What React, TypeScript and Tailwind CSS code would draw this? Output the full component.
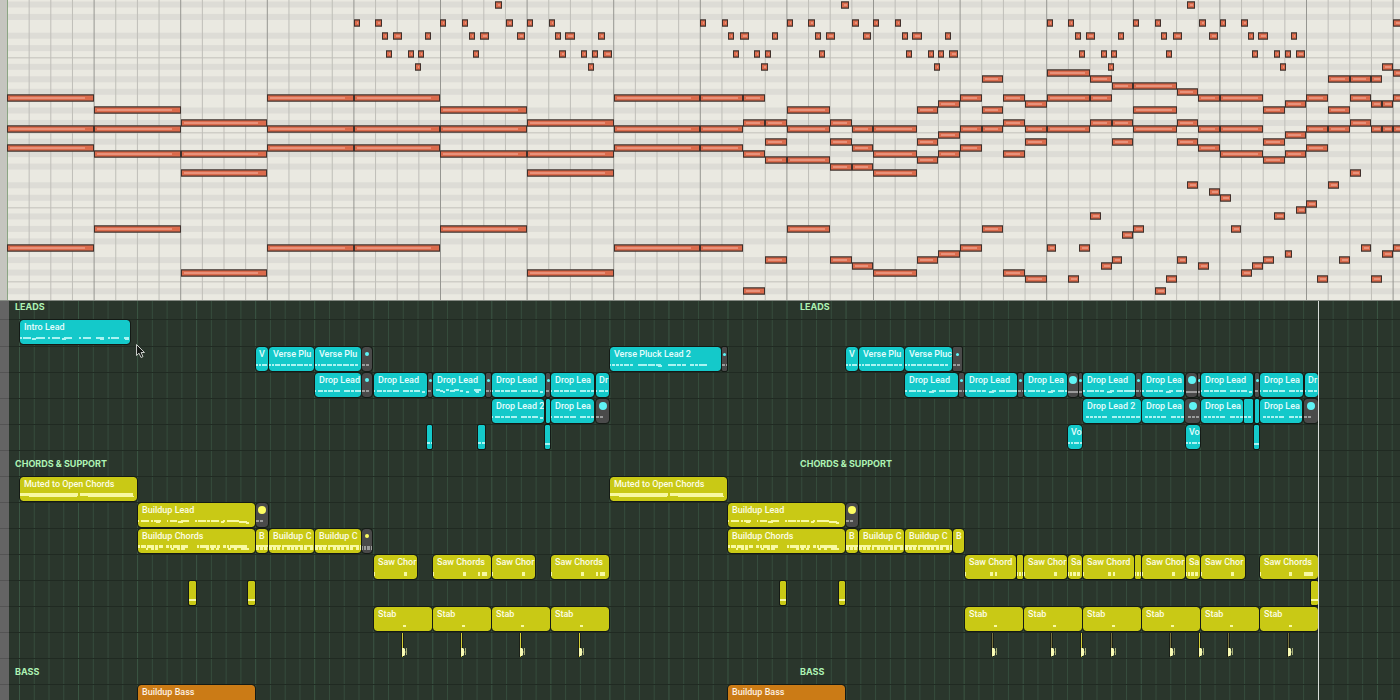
import type { ReactNode } from "react";

type Span = [start: number, length: number];

const BEAT = 21.65;
const ROLL_LEFT = 7.4;
const ROLL_WIDTH_BEATS = 140;
const SEMITONE = 6.234;
const BLACK_KEYS = [0, 2, 5, 7, 10];
const GUTTER = 9;

// sustained notes, keyed by the semitone row counted from the top
const NOTES: Record<number, Span[]> = {
  10: [[63.5, 0.5]],
  11: [[48, 2], [64, 1]],
  12: [[45, 1], [50, 1], [61, 1], [62, 1], [63, 0.5]],
  13: [[51, 1], [52, 2]],
  14: [[54, 1]],
  15: [[0, 4], [12, 4], [16, 4], [28, 4], [32, 2], [34, 1], [44, 1], [46, 1], [48, 2], [50, 1], [55, 1], [56, 2], [60, 1], [62, 1], [64, 1]],
  16: [[43, 1], [47, 1], [59, 1], [63, 0.5], [63.5, 0.5]],
  17: [[4, 4], [20, 4], [36, 2], [42, 1], [45, 1], [52, 2], [58, 1], [61, 1]],
  19: [[8, 4], [24, 4], [34, 1], [35, 1], [38, 1], [46, 1], [50, 1], [51, 1], [54, 1], [62, 1]],
  20: [[0, 4], [4, 4], [12, 4], [16, 4], [20, 4], [28, 4], [32, 2], [36, 2], [39, 1], [40, 2], [44, 1], [45, 1], [47, 1], [48, 2], [52, 2], [55, 1], [56, 2], [60, 1], [61, 1], [63, 0.5], [63.5, 0.5], [64, 1]],
  21: [[43, 1], [59, 1]],
  22: [[35, 1], [38, 1], [42, 1], [47, 1], [51, 1], [54, 1], [58, 1]],
  23: [[0, 4], [12, 4], [16, 4], [28, 4], [32, 2], [39, 1], [44, 1], [55, 1], [60, 1]],
  24: [[4, 4], [8, 4], [20, 4], [24, 4], [34, 1], [40, 2], [43, 1], [46, 1], [56, 2], [59, 1]],
  25: [[35, 1], [36, 2], [42, 1], [58, 1]],
  26: [[38, 1], [39, 1]],
  27: [[8, 4], [24, 4], [40, 2], [62, 0.5]],
  29: [[54.5, 0.5], [61, 0.5]],
  30: [[55.5, 0.5]],
  31: [[56, 0.5]],
  32: [[60, 0.5]],
  33: [[59.5, 0.5]],
  34: [[50, 0.5], [58.5, 0.5]],
  36: [[4, 4], [20, 4], [36, 2], [45, 1], [52, 0.5], [56.5, 0.5]],
  37: [[51.5, 0.5]],
  39: [[0, 4], [12, 4], [16, 4], [28, 4], [32, 2], [44, 1], [48, 0.45], [49.5, 0.5], [62.5, 0.5], [64, 1]],
  40: [[43, 1], [59, 0.35], [63.5, 0.5]],
  41: [[35, 1], [38, 1], [42, 1], [51, 0.5], [54, 0.5], [58, 0.5], [61.5, 0.5]],
  42: [[39, 1], [50.5, 0.5], [55, 0.5], [57.5, 0.5]],
  43: [[8, 4], [24, 4], [40, 2], [46, 1], [57, 0.5]],
  44: [[47, 1], [49, 0.5], [53.5, 0.5], [60.5, 0.5], [63, 0.5]],
  46: [[34, 1], [53, 0.5]],
};

// arpeggio that restarts every sixteen beats
const ARP: Record<number, Span[]> = {
  0: [[6.5, 0.35]],
  3: [[0, 0.28], [1, 0.28], [4, 0.28], [5, 0.28], [7.02, 0.33], [8, 0.28], [9, 0.28]],
  5: [[1.3, 0.28], [1.82, 0.42], [3.3, 0.28], [5.3, 0.28], [5.82, 0.42], [7.52, 0.38], [9.3, 0.28], [9.77, 0.47], [11.3, 0.28]],
  8: [[1.5, 0.28], [2.5, 0.28], [2.97, 0.28], [5.5, 0.28], [9.5, 0.28], [10.5, 0.28], [11, 0.28], [11.5, 0.42]],
  10: [[2.83, 0.28], [10.8, 0.28]],
};

function Note({ row, span }: { row: number; span: Span }) {
  const x = Math.round(ROLL_LEFT + span[0] * BEAT);
  const right = Math.round(ROLL_LEFT + (span[0] + span[1]) * BEAT);
  const y = Math.round(4.5 + row * SEMITONE) - 4;
  const w = right - x;
  const inner = w > 60 ? w - 12 : w > 12 ? w - 8 : w - 5;
  return (
    <g>
      <rect x={x} y={y} width={w} height={8} fill="#5a524c" opacity={0.6} />
      <rect x={x} y={y + 0.5} width={w} height={7} fill="#40302b" />
      <rect x={x + 1} y={y + 1.5} width={w - 2} height={5} fill="#db6b4c" />
      <rect x={x + 3} y={y + 3} width={inner} height={2} fill="#e8917a" />
    </g>
  );
}

function PianoRoll() {
  const rows = Array.from({ length: 48 }, (_, i) => i);
  const beats = Array.from({ length: ROLL_WIDTH_BEATS }, (_, i) => i);
  return (
    <svg className="block h-full w-full" role="img" aria-label="Piano roll">
      <rect width="100%" height="100%" fill="#eae9e1" />
      {rows
        .filter((row) => BLACK_KEYS.includes(row % 12))
        .map((row) => (
          <rect key={row} y={4.5 + row * SEMITONE - 3} width="100%" height={6} fill="#dddcd6" />
        ))}
      {[57, 132, 207, 281].map((y) => (
        <rect key={y} y={y} width="100%" height={1.5} fill="#cfcec7" />
      ))}
      {beats.map((beat) => (
        <rect
          key={beat}
          x={ROLL_LEFT - 0.4 + beat * BEAT}
          width={1}
          height="100%"
          fill={beat % 4 === 0 ? "#969691" : "#bfbeb8"}
        />
      ))}
      <rect width={7} height="100%" fill="#c5c5bf" />
      <rect x={7} width={1} height="100%" fill="#8ba583" />
      {Object.entries(NOTES).map(([row, spans]) =>
        spans.map((span) => <Note key={`${row}-${span[0]}`} row={Number(row)} span={span} />)
      )}
      {[16, 32, 48].map((offset) =>
        Object.entries(ARP).map(([row, spans]) =>
          spans.map(([start, length]) => (
            <Note key={`${offset}-${row}-${start}`} row={Number(row)} span={[start + offset, length]} />
          ))
        )
      )}
      <Note row={3} span={[64, 0.5]} />
    </svg>
  );
}

// [top, thickness, dash pattern]
type Stroke = [number, number, string];

const ART: Record<string, Stroke[]> = {
  intro: [[17, 2, "2 1 8 1 0 4 9 3 2 2 8 1 0 3 8 7 2 2 8 1 0 4 8 4 2 1 8 1 0 4 5 99"], [18, 2, "0 12 4 23 0 3 4 28 0 6 4 21 4 99"]],
  verse: [[17, 2, "2 1 2 1 5 1 5 1 3 1 5 1 6 1 4 1 3 99"]],
  verseLong: [[17, 2, "1 1 3 1 3 1 3 1 5 1 3 5 9 1 7 1 5 7 8 1 4 1 4 4 4 1 3 1 8 99"], [18, 2, "0 48 4 99"]],
  drop: [[17, 2, "1 2 5 1 3 1 5 1 6 4 6 1 3 1 6 99"], [18, 2, "0 48 3 99"]],
  dropWave: [[16, 2, "0 3 4 6 3 5 5 6 0 9 7 99"], [17, 2, "0 7 3 7 5 5 3 3 0 9 3 99"], [18, 2, "0 10 2 21 3 7 3 99"]],
  dropLong: [[17, 2, "2 2 7 1 4 1 4 6 4 3 6 1 20 99"], [18, 2, "0 24 5 99"]],
  drop2: [[17, 2, "0 3 3 1 3 1 3 1 3 1 5 5 5 1 3 1 3 1 4 1 4 1 4 99"]],
  muted: [[16, 3, "58 2 53 99"], [19, 1, "0 9 48 11 46 99"]],
  buildLead: [[17, 2, "1 2 8 2 2 1 7 1 0 5 1 2 7 1 0 3 8 6 2 1 8 1 3 1 8 4 2 2 12 99"], [18, 2, "0 18 4 18 5 38 3 15 8 99"], [19, 2, "0 108 3 99"]],
  buildChords: [[16, 3, "2 1 5 1 7 1 3 1 4 3 3 1 2 1 7 1 7 9 2 1 9 1 6 1 3 3 3 1 2 1 17 99"], [19, 2, "0 8 2 3 3 1 3 13 3 3 3 1 4 21 3 2 3 2 3 9 3 3 3 4 8 99"]],
  chordBlocks: [[16, 5, "3 1 3 1 3 2 2 3 3 1 3 1 3 2 3 1 3 3 3 1 3 99"], [16, 2, "12 2 8 3 9 2 6 99"]],
  sawShort: [[17, 4, "1 29 3 99"]],
  sawLong: [[17, 4, "1 29 3 12 2 2 5 99"]],
  sawPair: [[17, 4, "1 24 3 2 2 99"]],
  sawEnd: [[17, 4, "1 28 3 12 9 99"]],
  sawBlocks: [[17, 4, "1 1 2 1 3 1 3 99"]],
  stab: [[18, 2, "0 29 3 99"]],
  line: [[18, 2, "99"]],
  tail: [[17, 2, "3 1 3 99"]],
};

type Clip = [left: number, right: number, label: string, art: string, dot?: number];

// a clip with a dot is muted; the number is the dot's size
const LEADS: Clip[][] = [
  [[20, 130, "Intro Lead", "intro"]],
  [
    [256, 268, "V", "verse"],
    [269, 314, "Verse Plu", "verse"],
    [315, 361, "Verse Plu", "verse"],
    [362, 372, "", "tail", 4],
    [610, 721, "Verse Pluck Lead 2", "verseLong"],
    [722, 727, "", "tail", 3],
    [846, 858, "V", "verse"],
    [859, 904, "Verse Plu", "verse"],
    [905, 952, "Verse Pluc", "verse"],
    [953, 962, "", "tail", 3],
  ],
  [
    [315, 361, "Drop Lead", "drop"],
    [362, 372, "", "tail", 4],
    [374, 427, "Drop Lead", "drop"],
    [428, 432, "", "tail", 3],
    [433, 485, "Drop Lead", "dropWave"],
    [486, 491, "", "tail", 3],
    [492, 545, "Drop Lead", "drop"],
    [546, 550, "", "tail", 3],
    [551, 594, "Drop Lea", "drop"],
    [596, 609, "Dr", "drop"],
    [905, 958, "Drop Lead", "dropLong"],
    [959, 964, "", "tail", 3],
    [965, 1017, "Drop Lead", "dropLong"],
    [1018, 1023, "", "tail", 3],
    [1024, 1067, "Drop Lea", "dropLong"],
    [1068, 1078, "", "line", 7],
    [1079, 1082, "", "line", 3],
    [1083, 1135, "Drop Lead", "dropLong"],
    [1136, 1141, "", "tail", 3],
    [1142, 1184, "Drop Lea", "dropLong"],
    [1186, 1197, "", "line", 7],
    [1198, 1200, "", "line", 3],
    [1201, 1253, "Drop Lead", "drop"],
    [1255, 1259, "", "tail", 3],
    [1260, 1303, "Drop Lea", "drop"],
    [1305, 1318, "Dr", "drop"],
  ],
  [
    [492, 544, "Drop Lead 2", "drop"],
    [546, 550, "", ""],
    [551, 594, "Drop Lea", "drop"],
    [596, 609, "", "tail", 7],
    [1083, 1141, "Drop Lead 2", "drop2"],
    [1142, 1184, "Drop Lea", "drop2"],
    [1185, 1200, "", "drop2", 7],
    [1201, 1243, "Drop Lea", "drop2"],
    [1244, 1253, "", "tail"],
    [1255, 1259, "", ""],
    [1260, 1302, "Drop Lea", "drop2"],
    [1304, 1318, "", "tail", 7],
  ],
  [
    [427, 432, "", "tail"],
    [478, 485, "", "tail"],
    [545, 550, "", "line"],
    [1068, 1082, "Vo", "verse"],
    [1186, 1200, "Vo", "verse"],
    [1254, 1259, "", "line"],
  ],
];

const CHORDS: Clip[][] = [
  [
    [20, 137, "Muted to Open Chords", "muted"],
    [610, 727, "Muted to Open Chords", "muted"],
  ],
  [
    [138, 255, "Buildup Lead", "buildLead"],
    [256, 268, "", "tail", 7],
    [728, 845, "Buildup Lead", "buildLead"],
    [846, 858, "", "tail", 7],
  ],
  [
    [138, 255, "Buildup Chords", "buildChords"],
    [256, 268, "B", "chordBlocks"],
    [269, 314, "Buildup C", "chordBlocks"],
    [315, 361, "Buildup C", "chordBlocks"],
    [362, 372, "", "sawBlocks", 4],
    [728, 845, "Buildup Chords", "buildChords"],
    [846, 858, "B", "chordBlocks"],
    [859, 904, "Buildup C", "chordBlocks"],
    [905, 952, "Buildup C", "chordBlocks"],
    [953, 964, "B", ""],
  ],
  [
    [374, 417, "Saw Chor", "sawShort"],
    [433, 491, "Saw Chords", "sawLong"],
    [492, 535, "Saw Chor", "sawShort"],
    [551, 609, "Saw Chords", "sawLong"],
    [965, 1016, "Saw Chord", "sawPair"],
    [1017, 1023, "", "sawBlocks"],
    [1024, 1067, "Saw Chor", "sawShort"],
    [1068, 1082, "Sa", "sawBlocks"],
    [1083, 1134, "Saw Chord", "sawPair"],
    [1135, 1141, "", "sawBlocks"],
    [1142, 1185, "Saw Chor", "sawShort"],
    [1186, 1200, "Sa", "sawBlocks"],
    [1201, 1245, "Saw Chor", "sawShort"],
    [1260, 1318, "Saw Chords", "sawEnd"],
  ],
  [
    [189, 196, "", "line"],
    [248, 255, "", "line"],
    [780, 786, "", "line"],
    [839, 845, "", "line"],
    [1311, 1318, "", "line"],
  ],
  [374, 433, 492, 551, 965, 1024, 1083, 1142, 1201, 1260].map((x): Clip => [x, x + 58, "Stab", "stab"]),
];

const HITS = [402, 461, 520, 579, 992, 1051, 1081, 1111, 1170, 1199, 1228, 1288];

const BASS: Clip[] = [
  [138, 255, "Buildup Bass", ""],
  [728, 845, "Buildup Bass", ""],
];

const TONES = {
  cyan: { clip: "bg-[#14c9ca] text-[#e6fdfd]", ink: "#a9f3f2", dot: "bg-[#5ff3f5]" },
  yellow: { clip: "bg-[#c9c915] text-[#fdfde6]", ink: "#f8f9a2", dot: "bg-[#fbfb62]" },
  orange: { clip: "bg-[#cb7b16] text-[#fdf1e3]", ink: "#f5cf98", dot: "bg-[#ffb14d]" },
};

type Tone = keyof typeof TONES;

function ClipBox({ clip, tone }: { clip: Clip; tone: Tone }) {
  const [left, right, label, art, dot] = clip;
  const width = right - left;
  const colors = TONES[tone];
  return (
    <div
      className={`absolute top-0 h-6 overflow-hidden outline outline-[#141a15] ${
        width < 10 ? "rounded-[1px]" : "rounded-[3px]"
      } ${dot ? "bg-[#4a4a4a]" : colors.clip}`}
      style={{ left: left - GUTTER, width }}
    >
      {label && (
        <span
          className={`block text-[9px] font-medium leading-[14px] whitespace-nowrap ${width < 16 ? "pl-[3px]" : "pl-1"}`}
        >
          {label}
        </span>
      )}
      {dot && (
        <span className="flex h-[14px] items-center justify-center">
          <span className={`shrink-0 rounded-full ${colors.dot} ${dot > 5 ? "size-2" : dot > 3 ? "size-1" : "size-[3px]"}`} />
        </span>
      )}
      {art && (
        <svg className="absolute inset-0 h-full w-full" aria-hidden="true">
          {ART[art].map(([top, size, dash], i) => (
            <line
              key={i}
              x1="0"
              x2="100%"
              y1={top + size / 2}
              y2={top + size / 2}
              stroke={dot ? "#9b9b9b" : colors.ink}
              strokeWidth={size}
              strokeDasharray={dash}
            />
          ))}
        </svg>
      )}
    </div>
  );
}

function Lane({
  clips = [],
  tone = "cyan",
  height = "h-[26px]",
  children,
}: {
  clips?: Clip[];
  tone?: Tone;
  height?: string;
  children?: ReactNode;
}) {
  return (
    <div className={`flex shrink-0 ${height}`}>
      <div className="w-[9px] shrink-0 border-t border-[#545454] bg-[#646464]" />
      <div className="relative flex-1 border-t border-[#202a22]">
        {clips.map((clip) => (
          <ClipBox key={clip[0]} clip={clip} tone={tone} />
        ))}
        {children}
      </div>
    </div>
  );
}

function SectionRow({ title, className }: { title: string; className: string }) {
  return (
    <div className={`flex shrink-0 ${className}`}>
      <div className="w-[9px] shrink-0 border-t border-[#545454] bg-[#646464]" />
      <div className="flex flex-1 border-t border-[#202a22] pl-1.5 font-['Inter',sans-serif] text-[9px] font-bold leading-[11px] text-[#aef3b4]">
        <h2 className="w-[785px] shrink-0">{title}</h2>
        <h2>{title}</h2>
      </div>
    </div>
  );
}

function Hit({ x }: { x: number }) {
  return (
    <svg className="absolute top-0 h-6 w-2" style={{ left: x - GUTTER - 1 }} aria-hidden="true">
      <rect width={3} height={24} fill="#1a1f17" />
      <rect x={1} width={1} height={24} fill={x < 600 || x === 1081 || x === 1199 ? "#d3cf36" : "#77723e"} />
      <path d="M1 15H3L4 16V22L3 23H1Z" fill="#f8fbb4" />
      <path d="M4 19H5M5.5 15V22" stroke="#a3ab75" />
    </svg>
  );
}

function TimelineGrid() {
  const lines = Array.from({ length: 200 }, (_, i) => i);
  return (
    <svg className="absolute inset-0 h-full w-full" aria-hidden="true">
      {lines.map((i) => (
        <rect key={i} x={19 + i * 14.76} width={1} height="100%" fill={i % 4 === 0 ? "#3b5644" : "#364c3d"} />
      ))}
    </svg>
  );
}

export default function App() {
  return (
    <main className="flex h-screen w-full flex-col overflow-hidden bg-[#2a362c] font-['Roboto',sans-serif]">
      <section className="h-[300px] shrink-0 overflow-hidden">
        <PianoRoll />
      </section>
      <section className="relative flex-1 overflow-hidden border-t border-[#858a83]">
        <TimelineGrid />
        <div className="relative flex flex-col">
          <SectionRow title="LEADS" className="h-[18px] *:border-t-0" />
          {LEADS.map((clips, i) => (
            <Lane key={i} clips={clips} tone="cyan" height={i === 0 ? "h-[27px]" : "h-[26px]"} />
          ))}
          <SectionRow title="CHORDS & SUPPORT" className="h-[26px] *:items-center" />
          {CHORDS.map((clips, i) => (
            <Lane key={i} clips={clips} tone="yellow" />
          ))}
          <Lane>
            {HITS.map((x) => (
              <Hit key={x} x={x} />
            ))}
          </Lane>
          <SectionRow title="BASS" className="h-[26px] *:items-center" />
          <Lane clips={BASS} tone="orange" />
        </div>
        <div className="absolute inset-y-0 left-[1318px] w-px bg-[#d8dbd8]" />
        <svg className="absolute left-[135px] top-[42px] h-4 w-3" aria-hidden="true">
          <path
            d="M1.5 1.5V12.5L4 10.2L6 14.5L8 13.6L6.1 9.5H9.5Z"
            fill="#161a17"
            stroke="#c9cdc9"
            strokeLinejoin="round"
          />
        </svg>
      </section>
    </main>
  );
}
